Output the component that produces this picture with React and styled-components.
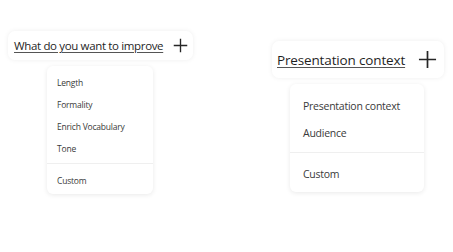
import styled, { createGlobalStyle } from "styled-components";

const GlobalStyle = createGlobalStyle`
  html, body {
    margin: 0;
    padding: 0;
    background: #ffffff;
    font-family: "Open Sans", "Noto Sans", sans-serif;
  }
`;

const small = {
  top: 31,
  left: 8,
  headW: 185,
  headH: 29,
  headPadL: 6,
  headPadR: 5,
  title: 11.5,
  titleTrack: -0.35,
  plus: 15,
  menuLeft: 39,
  menuW: 106,
  menuPadY: 5,
  itemH: 22,
  itemPad: 10,
  item: 8.5,
  itemTrack: -0.2,
  divGap: 4,
};

const large = {
  top: 41,
  left: 79,
  headW: 172,
  headH: 37,
  headPadL: 5,
  headPadR: 7,
  title: 13.5,
  titleTrack: -0.15,
  plus: 19,
  menuLeft: 18,
  menuW: 134,
  menuPadY: 8,
  itemH: 27,
  itemPad: 13,
  item: 10.5,
  itemTrack: -0.25,
  divGap: 6,
};

const Page = styled.div`
  display: flex;
  align-items: flex-start;
  width: 453px;
  height: 252px;
`;

const Picker = styled.div`
  display: flex;
  flex-direction: column;
  align-items: flex-start;
  margin-top: ${(p) => p.$s.top}px;
  margin-left: ${(p) => p.$s.left}px;
`;

const Header = styled.div`
  display: flex;
  align-items: center;
  justify-content: space-between;
  box-sizing: border-box;
  width: ${(p) => p.$s.headW}px;
  height: ${(p) => p.$s.headH}px;
  padding: 0 ${(p) => p.$s.headPadR}px 0 ${(p) => p.$s.headPadL}px;
  border-radius: 7px;
  background: #fff;
  box-shadow: 0 0 5px rgba(0, 0, 0, 0.07);
`;

const Title = styled.span`
  font-size: ${(p) => p.$s.title}px;
  font-weight: 500;
  letter-spacing: ${(p) => p.$s.titleTrack}px;
  color: #1f1f1f;
  text-decoration: underline;
  text-decoration-color: #555;
  text-underline-offset: 2px;
  white-space: nowrap;
`;

const Menu = styled.div`
  box-sizing: border-box;
  margin-top: 6px;
  margin-left: ${(p) => p.$s.menuLeft}px;
  width: ${(p) => p.$s.menuW}px;
  padding: ${(p) => p.$s.menuPadY}px 0 ${(p) => p.$s.divGap - 1}px;
  border-radius: 6px;
  background: #fff;
  box-shadow: 0 1px 5px rgba(0, 0, 0, 0.09);
`;

const Item = styled.div`
  display: flex;
  align-items: center;
  height: ${(p) => p.$s.itemH}px;
  padding-left: ${(p) => p.$s.itemPad}px;
  font-size: ${(p) => p.$s.item}px;
  letter-spacing: ${(p) => p.$s.itemTrack}px;
  color: #3a3a3a;
  white-space: nowrap;
`;

const Divider = styled.div`
  height: 1px;
  background: #efefef;
  margin: ${(p) => p.$s.divGap}px 0 ${(p) => p.$s.divGap + 1}px;
`;

function Plus({ size }) {
  return (
    <svg width={size} height={size} viewBox="0 0 20 20" fill="none">
      <path d="M10 1v18M1 10h18" stroke="#262626" strokeWidth="1.8" />
    </svg>
  );
}

function OptionPicker({ s, title, options }) {
  return (
    <Picker $s={s}>
      <Header $s={s}>
        <Title $s={s}>{title}</Title>
        <Plus size={s.plus} />
      </Header>
      <Menu $s={s}>
        {options.map((o) => (
          <Item key={o} $s={s}>
            {o}
          </Item>
        ))}
        <Divider $s={s} />
        <Item $s={s}>Custom</Item>
      </Menu>
    </Picker>
  );
}

export default function App() {
  return (
    <>
      <GlobalStyle />
      <Page>
        <OptionPicker
          s={small}
          title="What do you want to improve"
          options={["Length", "Formality", "Enrich Vocabulary", "Tone"]}
        />
        <OptionPicker
          s={large}
          title="Presentation context"
          options={["Presentation context", "Audience"]}
        />
      </Page>
    </>
  );
}
